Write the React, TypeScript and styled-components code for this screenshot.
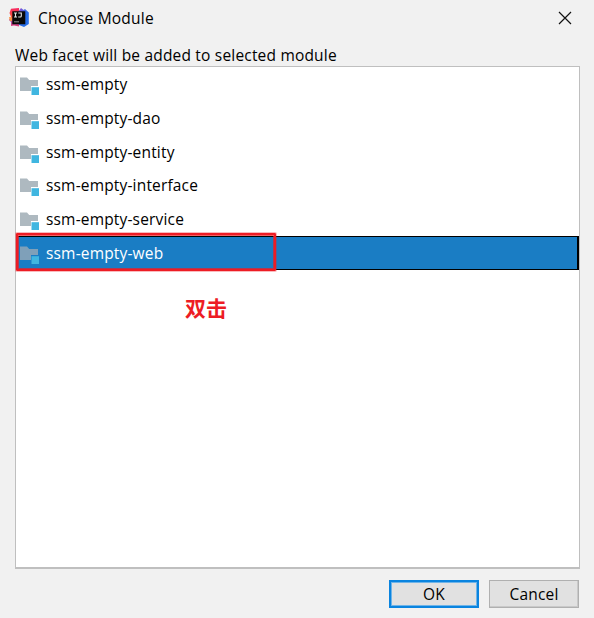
import React from "react";
import styled, { createGlobalStyle } from "styled-components";

const GlobalStyle = createGlobalStyle`
  * { box-sizing: border-box; }
  body { margin: 0; background: #f1f1f1; }
`;

const Dialog = styled.main`
  width: 594px;
  height: 618px;
  display: flex;
  flex-direction: column;
  background: #f1f1f1;
  color: #000;
  font: 16px/20px "Open Sans", "Noto Sans CJK SC", sans-serif;
  overflow: hidden;
`;

const TitleBar = styled.header`
  height: 36px;
  flex: none;
  display: flex;
  align-items: center;
  padding: 0 22px 0 9px;
`;

const Title = styled.h1`
  flex: 1;
  margin: 0 0 0 9px;
  font-size: 15.5px;
  font-weight: 400;
  letter-spacing: 0.23px;
  white-space: nowrap;
`;

const CloseButton = styled.button`
  width: 14px;
  height: 14px;
  padding: 0;
  border: 0;
  background: none;
  display: flex;
`;

const Message = styled.p`
  height: 30px;
  flex: none;
  margin: 0;
  padding: 9px 0 0 15px;
  font-size: 15.5px;
  letter-spacing: 0.19px;
  white-space: nowrap;
`;

const ModuleList = styled.ul`
  position: relative;
  width: 565px;
  height: 503px;
  flex: none;
  margin: 0 0 0 15px;
  padding: 0;
  list-style: none;
  background: #fff;
  border: 1px solid #bfbfbf;
  border-bottom-width: 2px;
`;

const ModuleRow = styled.li<{ $height: number; $selected: boolean }>`
  height: ${(p) => p.$height}px;
  display: flex;
  align-items: flex-start;
  padding: 0 0 0 4px;
  color: ${(p) => (p.$selected ? "#fff" : "#000")};
  background: ${(p) => (p.$selected ? "#1a7dc4" : "transparent")};
  box-shadow: ${(p) =>
    p.$selected ? "inset 0 1px #000, inset 0 -1px #000, inset -2px 0 #000" : "none"};
`;

const ModuleIcon = styled.svg`
  flex: none;
  margin-top: 10px;
`;

const ModuleName = styled.span`
  margin: 7px 0 0 7px;
  font-size: 15.5px;
  letter-spacing: 0.17px;
  white-space: nowrap;
`;

const Highlight = styled.div`
  position: absolute;
  left: 0;
  top: 166px;
  width: 260px;
  height: 38px;
  border: 2px solid #ed1c24;
  border-radius: 1px;
  box-shadow: inset 0 0 0 1px rgba(237, 28, 36, 0.7), 0 0 0 1px rgba(237, 28, 36, 0.3);
`;

const Annotation = styled.strong`
  position: absolute;
  left: 169px;
  top: 225px;
  color: #ed1c24;
  font: 700 21px/30px "Noto Sans CJK SC", sans-serif;
`;

const Actions = styled.footer`
  display: flex;
  justify-content: flex-end;
  gap: 10px;
  padding: 11px 15px 0 0;
`;

const ActionButton = styled.button<{ $primary?: boolean }>`
  width: 90px;
  height: 28px;
  padding: 0 0 1px;
  color: #000;
  font: 15.5px/20px "Open Sans", sans-serif;
  letter-spacing: 0.17px;
  background: #e1e1e1;
  border: ${(p) => (p.$primary ? "2px solid #0a84df" : "1px solid #b0b0b0")};
  box-shadow: ${(p) => (p.$primary ? "inset 0 0 0 1px #6fb4e8" : "inset -1px -1px #c9c9c9")};
`;

const modules = [
  { name: "ssm-empty", height: 34 },
  { name: "ssm-empty-dao", height: 34 },
  { name: "ssm-empty-entity", height: 33 },
  { name: "ssm-empty-interface", height: 34 },
  { name: "ssm-empty-service", height: 34 },
  { name: "ssm-empty-web", height: 34, selected: true },
];

function AppLogo() {
  return (
    <svg width="20" height="20" viewBox="0 0 20 20">
      <defs>
        <linearGradient id="warm" x1="0" y1="0" x2="0" y2="1">
          <stop offset="0" stopColor="#f72561" />
          <stop offset=".5" stopColor="#f95738" />
          <stop offset=".7" stopColor="#a44fa8" />
          <stop offset="1" stopColor="#e93c78" />
        </linearGradient>
        <linearGradient id="cool" x1="0" y1="0" x2="1" y2="1">
          <stop offset="0" stopColor="#a44bd0" />
          <stop offset=".5" stopColor="#286ce8" />
          <stop offset="1" stopColor="#256fe8" />
        </linearGradient>
      </defs>
      <path d="M2 .7 10 0v18.5L5 17.5l-3 .5V14L0 12l2-3L.5 5Z" fill="url(#warm)" />
      <path d="m0 9 3 .5V13H1Z" fill="#fb9340" />
      <path d="M9 4 12 0l2.5 2 1.5-1 3.8 3.5V16L15 19l-5-2Z" fill="url(#cool)" />
      <path d="M3.3 3.3h13v13h-13Z" fill="#090909" />
      <path d="M5 5h3M6.5 5v4M5 9h3M9.3 5h3v3q0 1-1 1H9.2" fill="none" stroke="#e6e6e6" strokeWidth="1.1" />
      <path d="M5 13.8h5" stroke="#8f8f8f" strokeWidth="1" />
    </svg>
  );
}

function FolderIcon({ selected }: { selected: boolean }) {
  return (
    <ModuleIcon width="19" height="18" viewBox="0 0 19 18">
      <path d="M0 .5h7L9.2 3H18v6h-7v5H0Z" fill={selected ? "#7fa0b9" : "#aeb9c0"} />
      <path d="M11.5 10.2H19V18h-7.5Z" fill="#40b6e0" />
    </ModuleIcon>
  );
}

export default function App() {
  return (
    <>
      <GlobalStyle />
      <Dialog>
        <TitleBar>
          <AppLogo />
          <Title>Choose Module</Title>
          <CloseButton aria-label="Close">
            <svg width="14" height="14" viewBox="0 0 14 14">
              <path d="m1 1 12 12M13 1 1 13" stroke="#111" strokeWidth="1.2" />
            </svg>
          </CloseButton>
        </TitleBar>
        <Message>Web facet will be added to selected module</Message>
        <ModuleList>
          {modules.map((m) => (
            <ModuleRow key={m.name} $height={m.height} $selected={!!m.selected}>
              <FolderIcon selected={!!m.selected} />
              <ModuleName>{m.name}</ModuleName>
            </ModuleRow>
          ))}
          <Highlight />
          <Annotation>双击</Annotation>
        </ModuleList>
        <Actions>
          <ActionButton $primary>OK</ActionButton>
          <ActionButton>Cancel</ActionButton>
        </Actions>
      </Dialog>
    </>
  );
}
